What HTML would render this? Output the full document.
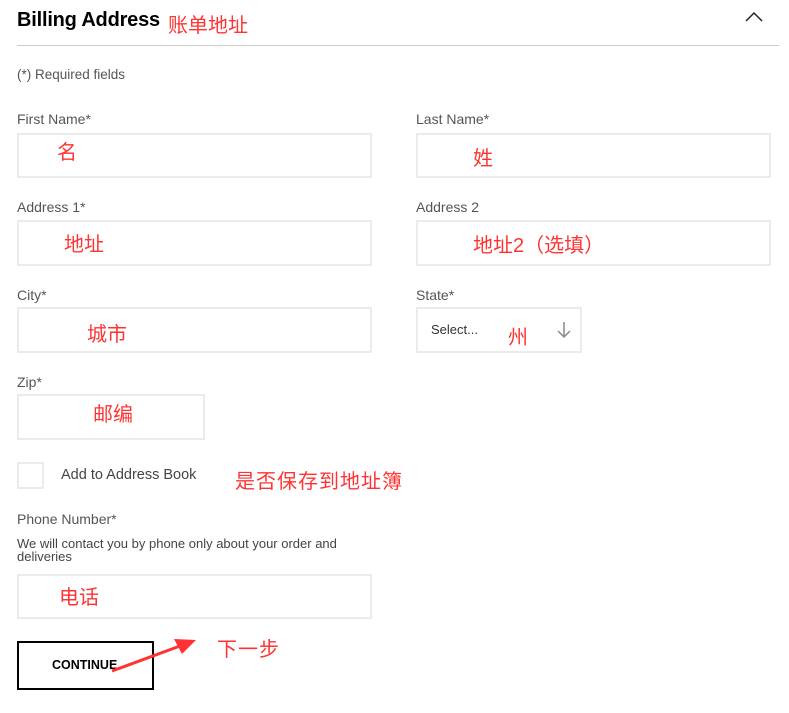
<!DOCTYPE html>
<html><head><meta charset="utf-8"><style>
body{margin:0;width:789px;height:713px;background:#fff;position:relative;font-family:"Liberation Sans",sans-serif;overflow:hidden}
.a{position:absolute;white-space:nowrap}
.t{font-weight:bold;font-size:20px;color:#000;left:17px;top:9px;letter-spacing:-0.2px}
.l{font-size:14px;color:#555}
.box{position:absolute;border:2px solid #ebebeb;box-sizing:border-box;background:#fff}
.r{position:absolute;color:#f33;font-family:"Liberation Sans","Noto Sans CJK SC",sans-serif;font-size:20px;white-space:nowrap;line-height:1}
</style></head><body>
<div class="a t">Billing Address</div>
<div class="r" style="left:168px;top:16px;font-size:20px">账单地址</div>
<svg class="a" style="left:744px;top:10px" width="20" height="14"><path d="M2 11 L10 3 L18 11" fill="none" stroke="#222" stroke-width="1.5"/></svg>
<div class="a" style="left:17px;top:45px;width:762px;height:1px;background:#ccc"></div>
<div class="a" style="left:17px;top:67px;font-size:13.5px;color:#555">(*) Required fields</div>

<div class="a l" style="left:17px;top:111px">First Name*</div>
<div class="box" style="left:17px;top:133px;width:355px;height:45px"></div>
<div class="r" style="left:57px;top:143px">名</div>
<div class="a l" style="left:416px;top:111px">Last Name*</div>
<div class="box" style="left:416px;top:133px;width:355px;height:45px"></div>
<div class="r" style="left:473px;top:149px">姓</div>

<div class="a l" style="left:17px;top:199px">Address 1*</div>
<div class="box" style="left:17px;top:220px;width:355px;height:46px"></div>
<div class="r" style="left:64px;top:235px">地址</div>
<div class="a l" style="left:416px;top:199px">Address 2</div>
<div class="box" style="left:416px;top:220px;width:355px;height:46px"></div>
<div class="r" style="left:473px;top:236px">地址2（选填）</div>

<div class="a l" style="left:17px;top:287px">City*</div>
<div class="box" style="left:17px;top:307px;width:355px;height:46px"></div>
<div class="r" style="left:87px;top:325px">城市</div>
<div class="a l" style="left:416px;top:287px">State*</div>
<div class="box" style="left:416px;top:307px;width:166px;height:46px"></div>
<div class="a" style="left:431px;top:322px;font-size:13px;color:#333">Select...</div>
<div class="r" style="left:508px;top:328px">州</div>
<svg class="a" style="left:557px;top:321px" width="14" height="18"><path d="M7 1 V16 M1 10 L7 16 L13 10" fill="none" stroke="#888" stroke-width="1.5"/></svg>

<div class="a l" style="left:17px;top:374px">Zip*</div>
<div class="box" style="left:17px;top:394px;width:188px;height:46px"></div>
<div class="r" style="left:93px;top:405px">邮编</div>

<div class="box" style="left:17px;top:462px;width:27px;height:27px"></div>
<div class="a l" style="left:61px;top:467px;color:#444;font-size:14.5px">Add to Address Book</div>
<div class="r" style="left:235px;top:472px;letter-spacing:1px">是否保存到地址簿</div>

<div class="a l" style="left:17px;top:511px">Phone Number*</div>
<div class="a" style="left:17px;top:537px;font-size:13px;color:#444;line-height:13px;white-space:normal;width:345px">We will contact you by phone only about your order and deliveries</div>
<div class="box" style="left:17px;top:574px;width:355px;height:45px"></div>
<div class="r" style="left:59px;top:588px">电话</div>

<div class="a" style="left:17px;top:641px;width:137px;height:49px;border:2px solid #000;box-sizing:border-box"></div>
<div class="a" style="left:52px;top:658px;font-size:12.5px;font-weight:bold;color:#000">CONTINUE</div>
<svg class="a" style="left:100px;top:630px" width="110" height="50"><path d="M12 41 L80 16" stroke="#f33" stroke-width="3"/><path d="M96 10 L74 9 L82 24 Z" fill="#f33"/></svg>
<div class="r" style="left:217px;top:640px;letter-spacing:1px">下一步</div>
</body></html>
